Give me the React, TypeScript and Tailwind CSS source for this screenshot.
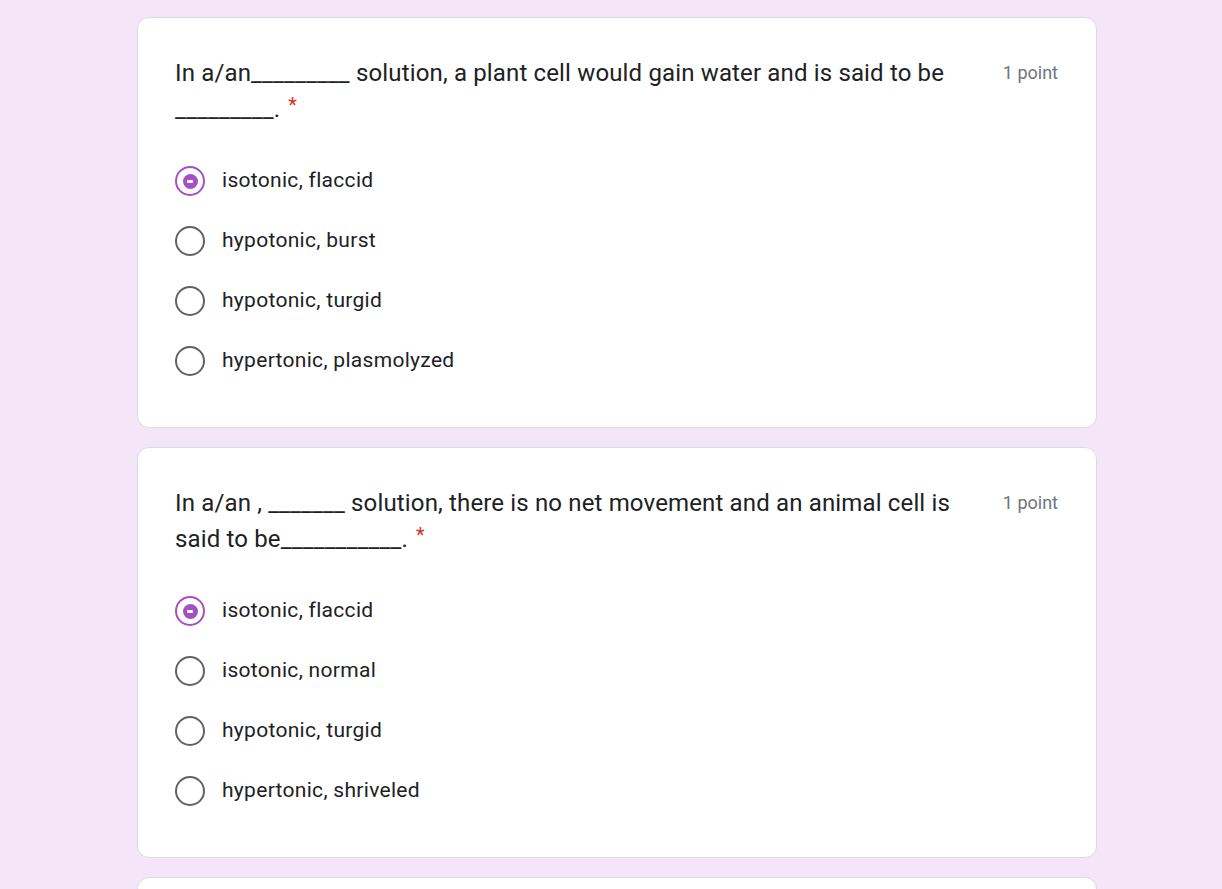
import React from 'react';

type Question = {
  title: string;
  points: string;
  options: string[];
  selected: number;
};

const questions: Question[] = [
  {
    title: 'In a/an_________ solution, a plant cell would gain water and is said to be _________.',
    points: '1 point',
    options: ['isotonic, flaccid', 'hypotonic, burst', 'hypotonic, turgid', 'hypertonic, plasmolyzed'],
    selected: 0,
  },
  {
    title: 'In a/an , _______ solution, there is no net movement and an animal cell is said to be___________.',
    points: '1 point',
    options: ['isotonic, flaccid', 'isotonic, normal', 'hypotonic, turgid', 'hypertonic, shriveled'],
    selected: 0,
  },
];

// ─── Radio ────────────────────────────────────────────────────────────
const Radio = ({ checked }: { checked: boolean }) =>
  checked ? (
    <span className="w-[30px] h-[30px] rounded-full border-[2.5px] border-[#a64fc2] flex items-center justify-center shrink-0">
      <span className="w-[15px] h-[15px] rounded-full bg-[#a64fc2] flex items-center justify-center">
        <span className="w-[6px] h-[3px] rounded-[1px] bg-white" />
      </span>
    </span>
  ) : (
    <span className="w-[30px] h-[30px] rounded-full border-[2.5px] border-[#5f6368] shrink-0" />
  );

// ─── Question card ────────────────────────────────────────────────────
const QuestionCard = ({ q }: { q: Question }) => (
  <div className="bg-white rounded-[12px] border-[1.5px] border-[#dadce0] pl-[37px] pr-[38px] pt-[37px] pb-[36px]">
    <div className="flex items-start gap-[40px] mb-[23px]">
      <div className="flex-1 text-[24px] leading-[36px] text-[#202124] font-['Roboto',sans-serif] tracking-[0.15px]">
        {q.title}
        <span className="relative -top-[5px] text-[20px] text-[#d93025] ml-[8px]">*</span>
      </div>
      <div className="text-[18px] leading-[36px] text-[#70757a] font-['Roboto',sans-serif] whitespace-nowrap">
        {q.points}
      </div>
    </div>
    <div className="flex flex-col">
      {q.options.map((opt, i) => (
        <label key={i} className="flex items-center gap-[17px] h-[60px] cursor-pointer">
          <Radio checked={i === q.selected} />
          <span className="text-[21px] text-[#202124] font-['Roboto',sans-serif] tracking-[0.3px]">{opt}</span>
        </label>
      ))}
    </div>
  </div>
);

export default function App() {
  return (
    <div className="min-h-screen bg-[#f4e5f8] pt-[17px] pb-[40px]">
      <div className="w-[960px] ml-[137px] flex flex-col gap-[19px]">
        {questions.map((q, i) => (
          <QuestionCard key={i} q={q} />
        ))}
        <div className="bg-white rounded-[12px] border-[1.5px] border-[#dadce0] h-[200px]" />
      </div>
    </div>
  );
}
